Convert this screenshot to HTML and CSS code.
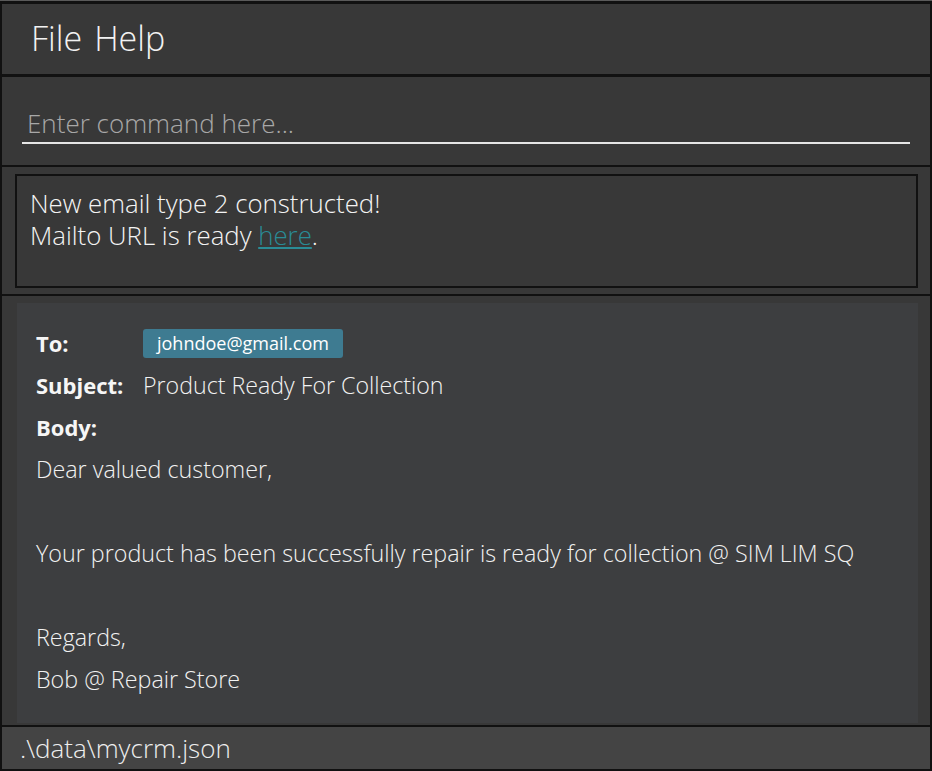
FILE: index.html
```html
<!DOCTYPE html>
<html>
<head>
<meta charset="utf-8">
<link rel="stylesheet" href="styles.css">
</head>
<body>
<div class="app">
  <div class="menubar">
    <span class="menu-item">File</span>
    <span class="menu-item">Help</span>
  </div>
  <div class="command">
    <div class="command-input">Enter command here...</div>
  </div>
  <div class="result">
    <div class="result-box">
      <div>New email type 2 constructed!</div>
      <div>Mailto URL is ready <a class="link">here</a>.</div>
    </div>
  </div>
  <div class="email">
    <div class="email-inner">
      <div class="row">
        <span class="label">To:</span>
        <span class="tag">johndoe@gmail.com</span>
      </div>
      <div class="row">
        <span class="label">Subject:</span>
        <span class="value">Product Ready For Collection</span>
      </div>
      <div class="row">
        <span class="label">Body:</span>
      </div>
      <div class="line">Dear valued customer,</div>
      <div class="line"></div>
      <div class="line">Your product has been successfully repair is ready for collection @ SIM LIM SQ</div>
      <div class="line"></div>
      <div class="line">Regards,</div>
      <div class="line">Bob @ Repair Store</div>
    </div>
  </div>
  <div class="status">.\data\mycrm.json</div>
</div>
</body>
</html>
```
FILE: styles.css
```css
* { box-sizing: border-box; }
html, body { margin: 0; padding: 0; }
body {
  background: #5a5a5a;
  font-family: "Open Sans", "Noto Sans", sans-serif;
  color: #f0f0f0;
  width: 932px;
  height: 771px;
  overflow: hidden;
  padding-top: 1px;
}
.app {
  height: 770px;
  display: flex;
  flex-direction: column;
  border: 2px solid #111;
  border-top-width: 3px;
  background: #383838;
}
.menubar {
  height: 73px;
  flex: none;
  display: flex;
  align-items: center;
  gap: 12px;
  padding-left: 29px;
  padding-bottom: 2px;
  border-bottom: 3px solid #111;
  font-size: 34px;
  font-weight: 300;
  color: #f2f2f2;
}
.command {
  height: 90px;
  flex: none;
  padding: 28px 20px 0 20px;
  border-bottom: 2px solid #111;
}
.command-input {
  height: 39px;
  padding-left: 5px;
  font-size: 26px;
  font-weight: 300;
  color: #a8a8a8;
  line-height: 36px;
  border-bottom: 2px solid #e6e6e6;
}
.result {
  height: 129px;
  flex: none;
  padding: 7px 12px 6px 13px;
  border-bottom: 2px solid #111;
}
.result-box {
  height: 100%;
  border: 2px solid #111;
  padding: 11px 13px;
  font-size: 25.8px;
  line-height: 32px;
  color: #f4f4f4;
  font-weight: 300;
}
.link {
  color: #2a8c96;
  text-decoration: underline;
}
.email {
  flex: 1;
  padding: 7px 12px 2px 15px;
  border-bottom: 2px solid #111;
  display: flex;
}
.email-inner {
  flex: 1;
  background: #3d3e40;
  padding: 19px 19px 0 19px;
}
.row {
  height: 42px;
  display: flex;
  align-items: center;
  font-size: 22px;
}
.label {
  width: 107px;
  font-weight: 700;
  color: #f6f6f6;
}
.tag {
  display: inline-block;
  background: #3e7b91;
  color: #fff;
  font-size: 18px;
  border-radius: 3px;
  padding: 1px 14px;
  line-height: 27px;
  height: 29px;
}
.value {
  font-size: 23.2px;
  font-weight: 300;
  color: #f2f2f2;
}
.line {
  height: 42px;
  line-height: 42px;
  font-size: 23.3px;
  font-weight: 300;
  color: #f2f2f2;
}
.status {
  height: 42px;
  flex: none;
  background: #444;
  padding-left: 18px;
  font-size: 26px;
  line-height: 42px;
  font-weight: 300;
  color: #eee;
}
```
